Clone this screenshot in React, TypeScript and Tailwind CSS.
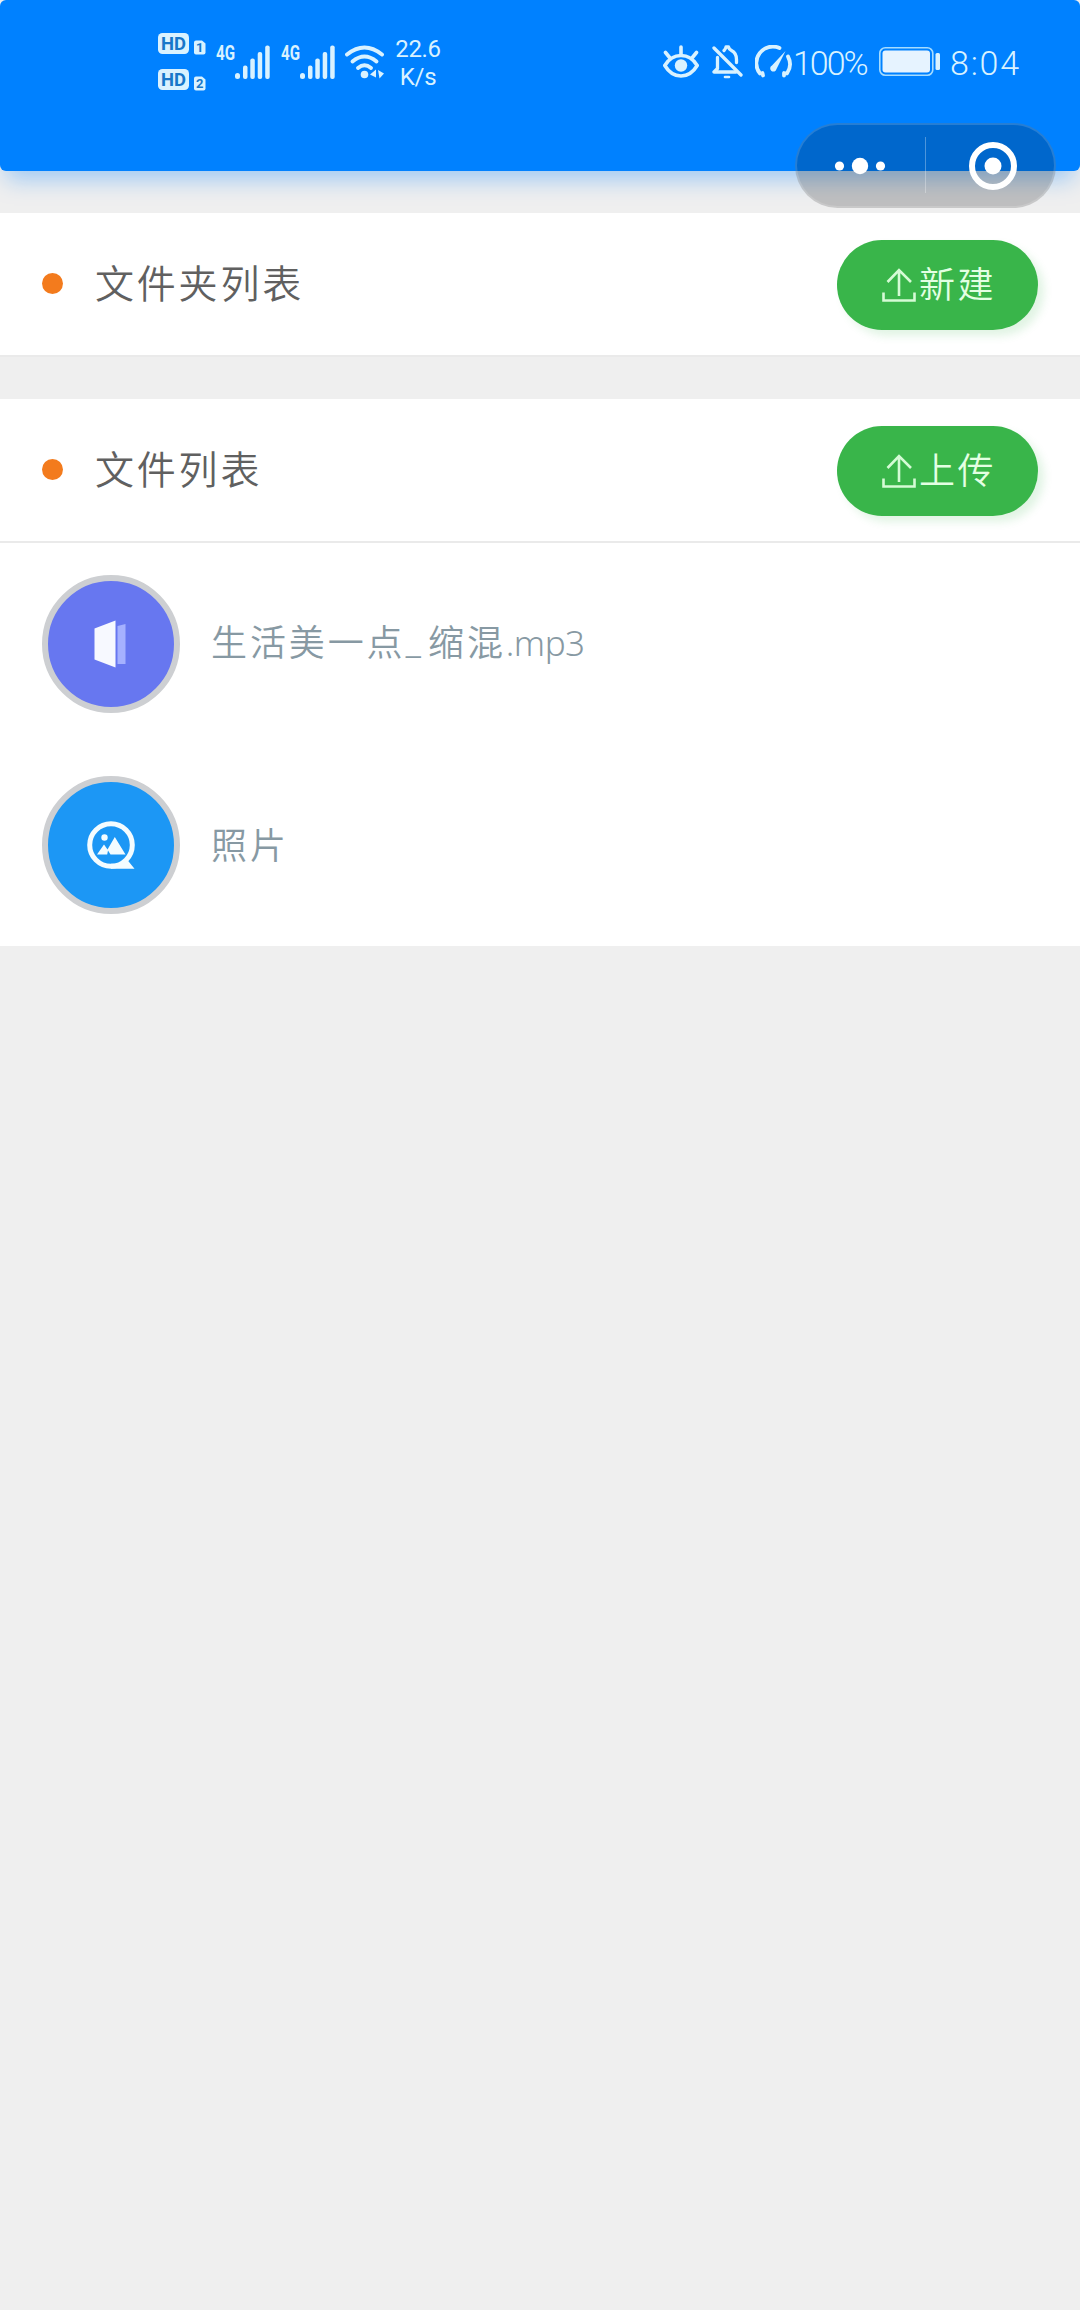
import type { ReactNode } from 'react';

function HdBadge({ slot }: { slot: string }) {
  return (
    <svg width="48" height="22" viewBox="0 0 48 22" fill="none" className="overflow-visible" aria-hidden>
      <rect x="0" y="0" width="31" height="21" rx="4.5" fill="#d9f2ff" />
      <text
        x="15.5"
        y="17"
        textAnchor="middle"
        textLength="25"
        lengthAdjust="spacingAndGlyphs"
        fontSize="18.5"
        fontWeight="700"
        fontFamily="Roboto, sans-serif"
        fill="#1877c9"
      >
        HD
      </text>
      <path d="M36 9.500a2 2 0 0 1 2-2h6l3.500 3v9a2 2 0 0 1-2 2H38a2 2 0 0 1-2-2z" fill="#d9f2ff" />
      <text
        x="41.700"
        y="19"
        textAnchor="middle"
        fontSize="13"
        fontWeight="700"
        fontFamily="Roboto, sans-serif"
        fill="#1877c9"
      >
        {slot}
      </text>
    </svg>
  );
}

function Signal() {
  return (
    <svg width="53" height="34" viewBox="0 0 53 34" className="overflow-visible" aria-hidden>
      <text
        x="-1"
        y="15"
        textLength="19"
        lengthAdjust="spacingAndGlyphs"
        fontSize="20.500"
        fontWeight="700"
        fontFamily="Roboto, sans-serif"
        fill="#d9f2ff"
      >
        4G
      </text>
      <g fill="#d9f2ff">
        <rect x="18" y="28" width="5" height="6" rx="2.5" />
        <rect x="26" y="20.500" width="4.500" height="13.500" rx="2" />
        <rect x="33.300" y="13.500" width="4.500" height="20.500" rx="2" />
        <rect x="40.700" y="7" width="4.500" height="27" rx="2" />
        <rect x="48.200" y="0.500" width="4.500" height="33.500" rx="2" />
      </g>
    </svg>
  );
}

function Wifi() {
  return (
    <svg width="40" height="34" viewBox="0 0 40 34" fill="none" aria-hidden>
      <g stroke="#d9f2ff" strokeWidth="3.900" strokeLinecap="round">
        <path d="M2 9.500Q19.500-4.500 37 9.500" />
        <path d="M7.500 16.500Q19.500 6.500 31.500 16.500" />
        <path d="M13 23Q19.500 17.500 26 23" />
      </g>
      <circle cx="19.500" cy="29.500" r="3.800" fill="#d9f2ff" />
      <path d="M25 29.500l6-5v8zM33 25l6 3.500-4.500 5z" fill="#d9f2ff" />
    </svg>
  );
}

function Eye() {
  return (
    <svg width="36" height="34" viewBox="0 0 36 34" fill="none" stroke="#d9f2ff" strokeWidth="3.600" strokeLinecap="round" aria-hidden>
      <path d="M1.800 20.500C6 13.500 11.500 10.500 18 10.500s12 3 16.200 10C30 27.500 24.500 31 18 31S6 27.500 1.800 20.500z" strokeLinejoin="round" />
      <path d="M18 2v8M2.500 7.500l4.500 5.500M33.500 7.500L29 13" />
      <circle cx="18" cy="20.500" r="6.200" fill="#d9f2ff" stroke="none" />
    </svg>
  );
}

function BellOff() {
  return (
    <svg width="31" height="34" viewBox="0 0 31 34" fill="none" stroke="#d9f2ff" strokeWidth="3.300" strokeLinecap="round" strokeLinejoin="round" aria-hidden>
      <path d="M2 3l27 27" />
      <path d="M5.500 12.500v11L2 27h22" />
      <path d="M12 5.500c1-1 1.500-1.200 2-3.500h2.500c.5 2 1 2.500 3 3.500 4 2 5 5 5 9v3" />
      <path d="M13 32h4" strokeWidth="2.600" />
    </svg>
  );
}

function Gauge() {
  return (
    <svg width="38" height="34" viewBox="0 0 38 34" fill="none" stroke="#d9f2ff" strokeWidth="3.800" strokeLinecap="round" aria-hidden>
      <path d="M8 30.500l-.5-2.500-2.500.5A16.500 16.500 0 0 1 24.500 3" strokeLinejoin="round" />
      <path d="M33 11.500a16.500 16.500 0 0 1-1 17l-3-.5v2.500" strokeLinejoin="round" />
      <path d="M30.500 6L17 20.500a3.200 3.200 0 1 0 4.500 3.500z" fill="#d9f2ff" stroke="none" />
    </svg>
  );
}

function Battery() {
  return (
    <svg width="62" height="30" viewBox="0 0 62 30" fill="none" aria-hidden>
      <rect x="0.800" y="0.800" width="53" height="27.500" rx="5.500" stroke="#a5dcff" strokeWidth="1.600" />
      <rect x="3.500" y="3.500" width="47.500" height="22" rx="3" fill="#e6f3ff" />
      <rect x="56.500" y="6" width="4.500" height="17" rx="1.500" fill="#d9f2ff" />
    </svg>
  );
}

function StatusBar() {
  return (
    <div className="flex h-[124px] items-center pr-[58px] pl-[158px] font-[Roboto,sans-serif] text-[#d9f2ff]">
      <div className="flex flex-col gap-[14px]">
        <HdBadge slot="1" />
        <HdBadge slot="2" />
      </div>
      <div className="ml-[11px] flex items-center gap-3">
        <Signal />
        <Signal />
      </div>
      <div className="ml-[10px]">
        <Wifi />
      </div>
      <div className="ml-[9px] w-[48px] pt-px text-center text-[24px] leading-[28px] tracking-[-0.300px]">
        <p>22.6</p>
        <p>K/s</p>
      </div>
      <div className="ml-auto flex items-center">
        <Eye />
        <span className="ml-[13px]"><BellOff /></span>
        <span className="ml-[12px]"><Gauge /></span>
        <span className="w-[86px] pt-0.5 text-[34px] leading-none font-light tracking-[-2px]">100%</span>
        <Battery />
        <span className="ml-[9px] w-[72px] pt-0.5 text-[34px] leading-none font-light tracking-[1.800px]">8:04</span>
      </div>
    </div>
  );
}

function Capsule() {
  return (
    <div className="absolute top-[123px] left-[795px] z-10 flex h-[85px] w-[261px] items-center rounded-full border-2 border-white/15 bg-black/20">
      <svg width="257" height="81" viewBox="0 0 257 81" fill="none" aria-hidden>
        <g fill="#ffffff">
          <circle cx="42.500" cy="41" r="4.600" />
          <circle cx="63" cy="41" r="8.200" />
          <circle cx="83.500" cy="41" r="4.600" />
          <circle cx="196" cy="41" r="8.500" />
        </g>
        <circle cx="196" cy="41" r="21" stroke="#ffffff" strokeWidth="6" />
        <path d="M128.500 12v56" stroke="#ffffff" strokeOpacity="0.300" strokeWidth="1" />
      </svg>
    </div>
  );
}

function SectionHeader({ title, action }: { title: string; action: string }) {
  return (
    <div className="flex h-[144px] items-center border-b-2 border-[#eaeaea] bg-white px-[42px]">
      <span className="mb-px size-[21px] rounded-full bg-[#f37b1d]" />
      <h2 className="ml-[32px] pb-[6px] text-[39px] leading-none font-[350] tracking-[2.800px] text-[#606060]">{title}</h2>
      <button className="mt-px ml-auto flex h-[90px] w-[201px] items-center rounded-full bg-[#39b54a] pl-[45px] text-[36px] leading-none font-[350] tracking-[2.500px] text-[#e3ffe3] shadow-[6px_6px_8px_rgba(57,181,74,0.15)]">
        <svg
          width="34"
          height="36"
          viewBox="0 0 34 36"
          fill="none"
          stroke="#d5fbd5"
          strokeWidth="2.600"
          className="mr-[3px]"
          aria-hidden
        >
          <path d="M1.500 25.500v8h31v-8M17 29V3M5.500 15L17 3l12 12" />
        </svg>
        <span className="pb-[6px]">{action}</span>
      </button>
    </div>
  );
}

function FileRow({ color, icon, children }: { color: string; icon: ReactNode; children: ReactNode }) {
  return (
    <li className="flex h-[201px] items-center px-[42px]">
      <span className={`flex size-[138px] items-center justify-center rounded-full border-[6px] border-[#cdcfd2] ${color}`}>
        {icon}
      </span>
      <p className="ml-[31px] pb-1 text-[36px] leading-none font-[350] tracking-[2.900px] text-[#8799a3]">{children}</p>
    </li>
  );
}

function AudioIcon() {
  return (
    <svg width="50" height="50" viewBox="0 0 50 50" aria-hidden>
      <path d="M8.500 9.500l21-8v47l-21-8z" fill="#f7f9ff" />
      <path d="M31.500 7l8-2v40h-8z" fill="#a5b1ff" />
    </svg>
  );
}

function PhotoIcon() {
  return (
    <svg width="50" height="50" viewBox="0 0 50 50" fill="none" aria-hidden>
      <circle cx="25" cy="25" r="21.300" stroke="#f4fcff" strokeWidth="5" />
      <path d="M25 43.800h11l5-4.300 7.500 9.300H25z" fill="#f4fcff" />
      <circle cx="18.500" cy="17.500" r="3.200" fill="#f4fcff" />
      <path d="M11 34.500l7-10 3.500 5 7.300-12.500 10.700 17.500H24.500l-2.500-4-.8 4z" fill="#f4fcff" />
    </svg>
  );
}

export default function App() {
  return (
    <div className="relative min-h-[2310px] w-[1080px] bg-[#efefef] font-['Noto_Sans_CJK_SC',sans-serif]">
      <header className="h-[171px] rounded-[6px] bg-[#0081ff] shadow-[0_14px_22px_-6px_rgba(0,129,255,0.35)]">
        <StatusBar />
      </header>
      <Capsule />

      <main>
        <section className="pt-[42px]">
          <SectionHeader title="文件夹列表" action="新建" />
        </section>
        <section className="pt-[42px]">
          <SectionHeader title="文件列表" action="上传" />
          <ul className="flex flex-col bg-white pb-px">
            <FileRow color="bg-[#6777f0]" icon={<AudioIcon />}>
              生活美一点<span className="font-[Roboto,sans-serif]">_</span>
              <span className="ml-[4px]">缩混</span>
              <span className="font-['Noto_Sans',sans-serif] text-[35px] tracking-[-0.500px]">.mp3</span>
            </FileRow>
            <FileRow color="bg-[#1c97f5]" icon={<PhotoIcon />}>
              照片
            </FileRow>
          </ul>
        </section>
      </main>
    </div>
  );
}
